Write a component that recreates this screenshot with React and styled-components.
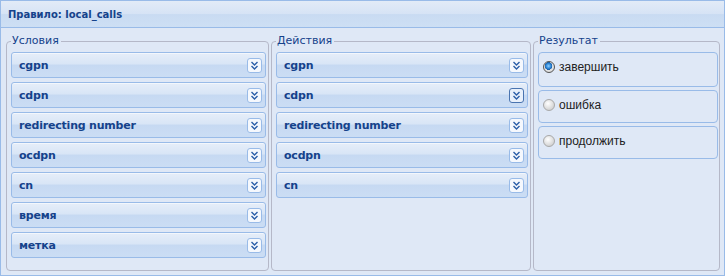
import React from "react";
import styled, { createGlobalStyle } from "styled-components";

const Global = createGlobalStyle`
  html, body {
    margin: 0;
    padding: 0;
    background: #fff;
  }
  * {
    box-sizing: border-box;
  }
`;

const Panel = styled.div`
  width: 725px;
  height: 276px;
  border: 1px solid #99bbe8;
  display: flex;
  flex-direction: column;
  font-family: "DejaVu Sans", "Liberation Sans", sans-serif;
  background: #dfe8f6;
`;

const Header = styled.div`
  height: 27px;
  flex: none;
  padding: 0 7px;
  display: flex;
  align-items: center;
  border-bottom: 1px solid #99bbe8;
  background: linear-gradient(#e2ebf7 0%, #d6e3f5 50%, #c9dbf2 52%, #cddff4 100%);
  color: #15428b;
  font-weight: bold;
  font-size: 10px;
`;

const Body = styled.div`
  flex: 1;
  display: grid;
  grid-template-columns: 263px 260px 187px;
  column-gap: 2px;
  padding: 6px 4px 4px 5px;
`;

const Group = styled.fieldset`
  margin: 0;
  padding: ${(p) => p.$pad};
  border: 1px solid #b5b8c8;
  border-radius: 4px;
  display: flex;
  flex-direction: column;
  gap: ${(p) => p.$gap}px;
  min-width: 0;
`;

const Legend = styled.legend`
  padding: 0 2px 0 1px;
  margin-left: 0;
  color: #15428b;
  font-size: 11px;
  line-height: 14px;
`;

const Row = styled.div`
  height: 26px;
  border: 1px solid #99bbe8;
  border-radius: 3px;
  display: flex;
  align-items: center;
  justify-content: space-between;
  padding: 0 3px 0 7px;
  background: linear-gradient(#e6eef9 0%, #d8e5f6 46%, #c6d9f2 50%, #cbddf4 100%);
  box-shadow: inset 0 1px 0 rgba(255, 255, 255, 0.55);
  color: #15428b;
  font-weight: bold;
  font-size: 11px;
  letter-spacing: -0.2px;
`;

const Tool = styled.span`
  width: 15px;
  height: 15px;
  border: 1px solid ${(p) => (p.$hover ? "#4a74b0" : "#99bbe8")};
  border-radius: 3px;
  background: ${(p) => (p.$hover ? "#e8f0fb" : "#f5f8fd")};
  display: flex;
  align-items: center;
  justify-content: center;
`;

const Option = styled.div`
  height: ${(p) => p.$h}px;
  border: 1px solid #99bbe8;
  border-radius: 4px;
  display: flex;
  align-items: flex-start;
  gap: 4px;
  padding: 7px 0 0 4px;
  font-family: "Liberation Sans", sans-serif;
  font-size: 12px;
  color: #222;
`;

const Radio = styled.span`
  width: 12px;
  height: 12px;
  margin-top: 1px;
  border-radius: 50%;
  border: 1px solid ${(p) => (p.$on ? "#555" : "#a8a8a8")};
  background: ${(p) =>
    p.$on
      ? "radial-gradient(circle at 45% 40%, #8fd0ff 0, #2d86d6 30%, #1a5fa8 45%, #e6e6e6 50%, #cfcfcf 100%)"
      : "radial-gradient(circle at 40% 35%, #ffffff 0, #e4e4e4 45%, #c4c4c4 100%)"};
  flex: none;
`;

const Chevrons = () => (
  <svg width="9" height="9" viewBox="0 0 9 9">
    <path d="M1.5 1 L4.5 4 L7.5 1 M1.5 5 L4.5 8 L7.5 5" fill="none" stroke="#2b5ea8" strokeWidth="1.4" />
  </svg>
);

const conditions = ["cgpn", "cdpn", "redirecting number", "ocdpn", "cn", "время", "метка"];
const actions = ["cgpn", "cdpn", "redirecting number", "ocdpn", "cn"];
const results = [
  { label: "завершить", on: true, h: 35 },
  { label: "ошибка", on: false, h: 33 },
  { label: "продолжить", on: false, h: 33 },
];

export default function App() {
  return (
    <>
      <Global />
      <Panel>
        <Header>Правило: local_calls</Header>
        <Body>
          <Group $pad="4px 2px 0 4px" $gap={4}>
            <Legend>Условия</Legend>
            {conditions.map((c) => (
              <Row key={c}>
                {c}
                <Tool>
                  <Chevrons />
                </Tool>
              </Row>
            ))}
          </Group>
          <Group $pad="4px 2px 0 4px" $gap={4}>
            <Legend>Действия</Legend>
            {actions.map((c) => (
              <Row key={c}>
                {c}
                <Tool $hover={c === "cdpn"}>
                  <Chevrons />
                </Tool>
              </Row>
            ))}
          </Group>
          <Group $pad="4px 1px 0 4px" $gap={3}>
            <Legend>Результат</Legend>
            {results.map((r) => (
              <Option key={r.label} $h={r.h}>
                <Radio $on={r.on} />
                {r.label}
              </Option>
            ))}
          </Group>
        </Body>
      </Panel>
    </>
  );
}
